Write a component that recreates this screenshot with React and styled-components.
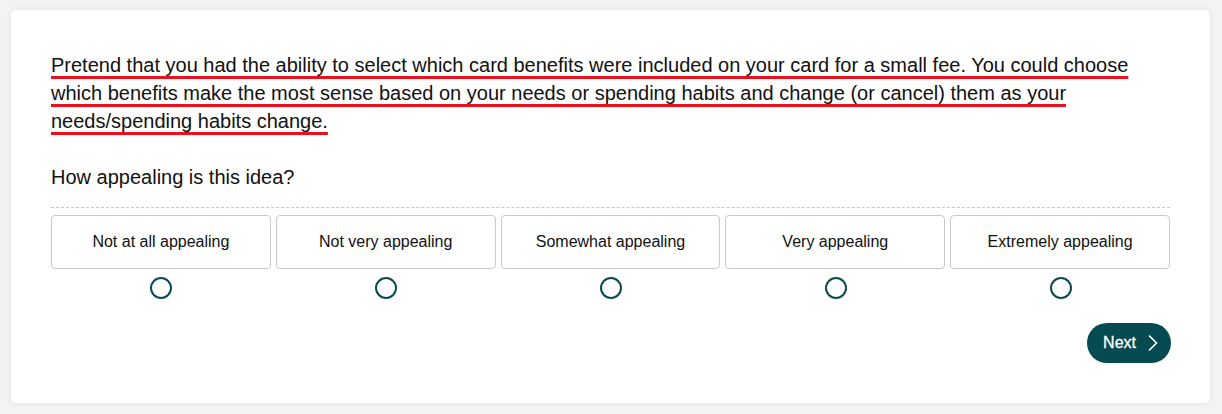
import React from 'react'
import styled, { createGlobalStyle } from 'styled-components'

const Global = createGlobalStyle`
  html, body {
    margin: 0;
    padding: 0;
    background: #f2f4f4;
    font-family: "Liberation Sans", Arial, sans-serif;
  }
`

const Page = styled.div`
  padding: 10px 12px 10px 11px;
`

const Card = styled.div`
  background: #fff;
  border-radius: 5px;
  box-shadow: 0 0 6px rgba(0, 0, 0, 0.08);
  padding: 41px 40px 40px 40px;
  min-height: 312px;
`

const Intro = styled.p`
  margin: 0;
  font-size: 20px;
  line-height: 28px;
  color: #111;
  text-decoration: underline;
  text-decoration-color: #e8111c;
  text-decoration-thickness: 3px;
  text-underline-offset: 4px;
  text-decoration-skip-ink: none;
`

const Question = styled.p`
  margin: 30px 0 0;
  font-size: 20px;
  line-height: 24px;
  color: #111;
`

const Divider = styled.div`
  margin-top: 18px;
  border-top: 1px dashed #c8c8c8;
`

const Scale = styled.div`
  display: grid;
  grid-template-columns: repeat(5, 1fr);
  gap: 5px;
  margin-top: 7px;
`

const Option = styled.label`
  display: flex;
  flex-direction: column;
  align-items: center;
  gap: 8px;
  cursor: pointer;
`

const OptionBox = styled.div`
  box-sizing: border-box;
  width: 100%;
  height: 54px;
  border: 1px solid #c9c9c9;
  border-radius: 4px;
  display: flex;
  align-items: center;
  justify-content: center;
  font-size: 16px;
  color: #111;
`

const Radio = styled.span`
  box-sizing: border-box;
  width: 22px;
  height: 22px;
  margin-left: 1px;
  border-radius: 50%;
  border: 2px solid #0b4a50;
`

const Footer = styled.div`
  display: flex;
  justify-content: flex-end;
  margin-top: 24px;
`

const NextButton = styled.button`
  display: flex;
  align-items: center;
  gap: 11px;
  height: 40px;
  margin-right: -1px;
  padding: 0 13px 0 16px;
  border: none;
  border-radius: 20px;
  background: #054a51;
  color: #fff;
  font-family: "Liberation Sans", Arial, sans-serif;
  font-size: 16px;
  font-weight: normal;
  -webkit-text-stroke: 0.3px #fff;
  cursor: pointer;
`

const options = [
  'Not at all appealing',
  'Not very appealing',
  'Somewhat appealing',
  'Very appealing',
  'Extremely appealing',
]

const App = () => {
  return (
    <Page>
      <Global />
      <Card>
        <Intro>
          Pretend that you had the ability to select which card benefits were included on your card for a small fee. You could choose which benefits make the most sense based on your needs or spending habits and change (or cancel) them as your needs/spending habits change.
        </Intro>
        <Question>How appealing is this idea?</Question>
        <Divider />
        <Scale>
          {options.map((o) => (
            <Option key={o}>
              <OptionBox>{o}</OptionBox>
              <Radio />
            </Option>
          ))}
        </Scale>
        <Footer>
          <NextButton>
            Next
            <svg width="11" height="18" viewBox="0 0 11 18" fill="none">
              <path d="M2 1.5l7.5 7.5-7.5 7.5" stroke="#fff" strokeWidth="1.6" />
            </svg>
          </NextButton>
        </Footer>
      </Card>
    </Page>
  )
}

export default App
